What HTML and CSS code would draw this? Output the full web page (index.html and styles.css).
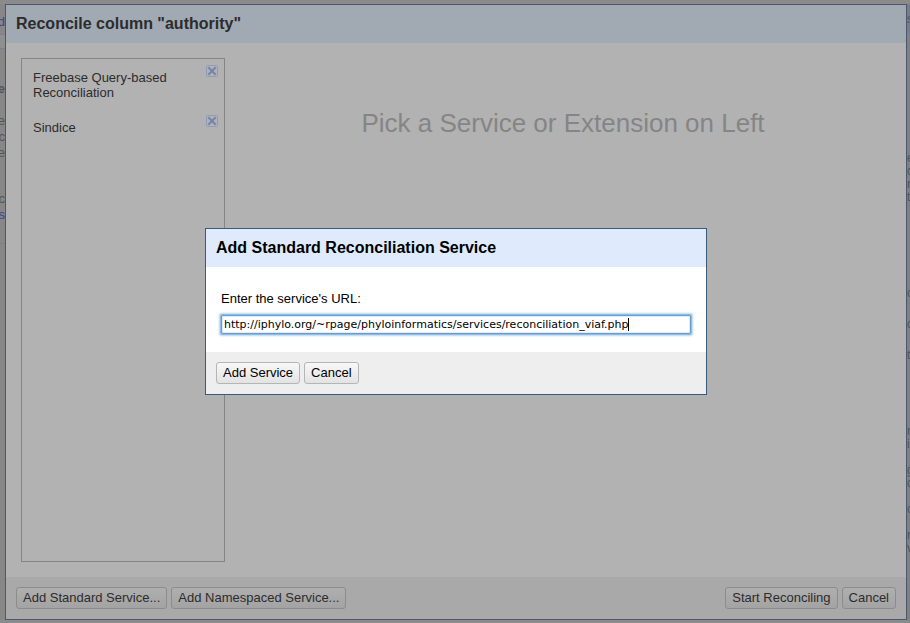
FILE: index.html
```html
<!DOCTYPE html>
<html lang="en">
<head>
<meta charset="utf-8">
<title>Reconcile column</title>
<link rel="stylesheet" href="styles.css">
</head>
<body>
<div class="page">
  <div class="edge edge-left" aria-hidden="true">
    <div class="tab link">d</div>
    <div class="rule"></div>
    <div class="strong">e</div>
    <div class="lines">se<br>nc<br>e</div>
    <div class="lines last">ec<br><span class="link">ts</span></div>
  </div>
  <main class="dialog">
    <header class="dialog-header">Reconcile column "authority"</header>
    <div class="dialog-body">
      <ul class="services">
        <li class="service"><span>Freebase Query-based Reconciliation</span>
          <button class="remove" aria-label="Remove Freebase"><svg viewBox="0 0 12 12"><rect x=".5" y=".5" width="11" height="11" rx="1"/><path d="M3 3l6 6M9 3l-6 6"/></svg></button></li>
        <li class="service"><span>Sindice</span>
          <button class="remove" aria-label="Remove Sindice"><svg viewBox="0 0 12 12"><rect x=".5" y=".5" width="11" height="11" rx="1"/><path d="M3 3l6 6M9 3l-6 6"/></svg></button></li>
      </ul>
      <p class="hint">Pick a Service or Extension on Left</p>
    </div>
    <footer class="dialog-footer">
      <button class="button dim">Add Standard Service...</button>
      <button class="button dim">Add Namespaced Service...</button>
      <span class="spacer"></span>
      <button class="button dim">Start Reconciling</button>
      <button class="button dim">Cancel</button>
    </footer>
    <section class="modal" role="dialog" aria-labelledby="modal-title">
      <h2 class="modal-header" id="modal-title">Add Standard Reconciliation Service</h2>
      <div class="modal-body">
        <label for="url">Enter the service's URL:</label>
        <div class="field">
          <input id="url" type="text" value="http://iphylo.org/~rpage/phyloinformatics/services/reconciliation_viaf.php">
          <span class="caret"></span>
        </div>
      </div>
      <div class="modal-footer">
        <button class="button">Add Service</button>
        <button class="button">Cancel</button>
      </div>
    </section>
  </main>
  <div class="edge edge-right" aria-hidden="true">
    <div class="top">s</div>
    <div class="lines">e<br>c<br>r<br>t</div>
    <div class="lines spread">c<br>c<br>t</div>
    <div class="lines low">n<br>i<br><br>g<br>o<br><br>c<br><br>r<br>v</div>
  </div>
</div>
</body>
</html>
```
FILE: styles.css
```css
* { box-sizing: border-box; }

body {
  margin: 0;
  background: #8b8b8b;
  color: #2c2c2c;
  font: 13px/15px "Liberation Sans", Arial, sans-serif;
}

.page {
  display: grid;
  grid-template-columns: 5px minmax(0, 1fr) 3px;
  height: 100vh;
  padding: 4px 0 3px;
}

/* Slivers of the workspace behind the dialog */
.edge {
  display: flex;
  flex-direction: column;
  overflow: hidden;
  min-height: 0;
  color: #555;
}
.edge-left { align-items: flex-end; background: #878787; }
.edge-left .tab { padding: 10px 0 5px; }
.edge-left .rule { width: 5px; height: 15px; border: solid #7b7f95; border-width: 1px 0; background: #8f8f8f; }
.edge-left .strong { margin-top: 32px; font-weight: bold; }
.edge-left .lines { margin-top: 17px; line-height: 16px; text-align: right; }
.edge-left .last { margin-top: 30px; }
.edge-left .lines.last { padding-bottom: 20px; border-bottom: 1px solid #7b7f95; }
.link { color: #454090; }

.edge-right { background: #808084; font-size: 12px; }
.edge-right .top { height: 30px; padding-top: 8px; background: #777e8b; }
.edge-right .lines { margin-top: 118px; line-height: 13px; }
.edge-right .lines.spread { margin-top: 74px; line-height: 31px; }
.edge-right .lines.low { margin-top: 54px; }

.dialog {
  position: relative;
  display: flex;
  flex-direction: column;
  min-height: 0;
  border: 1px solid #4b586b;
  background: #b2b2b2;
}
.dialog-header {
  padding: 10px;
  background: #a1a9b3;
  font-size: 16px;
  line-height: 18px;
  font-weight: bold;
}
.dialog-body {
  display: grid;
  grid-template-columns: 204px minmax(0, 1fr);
  flex: 1;
  gap: 10px;
  padding: 15px;
  min-height: 0;
}
.services {
  margin: 0;
  padding: 6px;
  border: 1px solid #858585;
  list-style: none;
}
.service {
  display: flex;
  justify-content: space-between;
  align-items: flex-start;
  padding: 0 0 15px 5px;
}
.service span { width: 150px; padding: 5px 0 0; }
.remove { width: 12px; height: 12px; padding: 0; border: 0; background: none; }
.remove svg { display: block; width: 12px; height: 12px; fill: #b0b2b6; stroke: #929cb4; }
.remove path { fill: none; stroke: #7484ad; stroke-width: 2; stroke-linecap: square; }
.hint {
  margin: 49px 0 0;
  color: #858585;
  font-size: 26px;
  line-height: 32px;
  text-align: center;
}
.dialog-footer, .modal-footer {
  display: flex;
  gap: 4px;
  padding: 10px;
}
.dialog-footer { background: #a9a9a9; }
.spacer { flex: 1; }

.button {
  height: 22px;
  padding: 0 6px 2px;
  border: 1px solid #b5b5b5;
  border-radius: 3px;
  background: linear-gradient(#f8f8f8, #e3e3e3);
  color: #000;
  font: inherit;
}
.button.dim {
  border-color: #8c8c8c;
  background: linear-gradient(#afafaf, #a3a3a3);
  color: #2c2c2c;
}

.modal {
  position: absolute;
  inset: 0 0 1px;
  width: 502px;
  max-width: 100%;
  height: fit-content;
  margin: auto;
  border: 1px solid #3a5a78;
  background: #fff;
  color: #000;
}
.modal-header {
  margin: 0;
  padding: 10px;
  background: #dfebfd;
  font-size: 16px;
  line-height: 18px;
}
.modal-body { padding: 24px 15px 18px; }
.modal-body label { display: block; margin-bottom: 9px; }
.field {
  display: flex;
  align-items: center;
  height: 19px;
  padding-left: 2px;
  border: 1px solid #6b9ccb;
  border-radius: 1px;
  box-shadow: 0 0 0 1px #8fbbe4, 0 0 2px 2px #b8d5ef, inset 0 0 1px 1px #dce9f5;
}
.field input {
  field-sizing: content;
  min-width: 0;
  padding: 0;
  border: 0;
  outline: 0;
  background: none;
  color: #000;
  font: 11px/15px "DejaVu Sans", sans-serif;
}
.caret { width: 1px; height: 13px; background: #000; }
.modal-footer { background: #eee; }
```
